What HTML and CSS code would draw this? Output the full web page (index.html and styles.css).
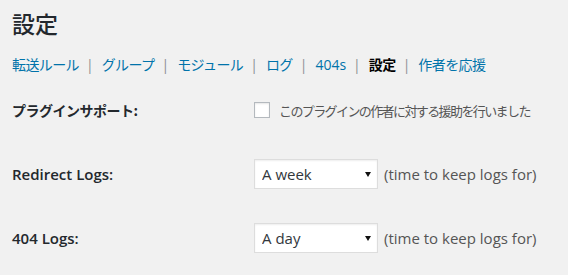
FILE: index.html
```html
<!DOCTYPE html>
<html lang="ja">
<head>
  <meta charset="UTF-8" />
  <title>設定</title>
  <link rel="stylesheet" href="styles.css">
</head>
<body>
  <div class="wrap">
    <h1>設定</h1>

    <ul class="subnav">
      <li><a href="#">転送ルール</a><span class="sep">|</span></li>
      <li><a href="#">グループ</a><span class="sep">|</span></li>
      <li><a href="#">モジュール</a><span class="sep">|</span></li>
      <li><a href="#">ログ</a><span class="sep">|</span></li>
      <li><a href="#" class="latin">404s</a><span class="sep">|</span></li>
      <li><a href="#" class="current">設定</a><span class="sep">|</span></li>
      <li><a href="#">作者を応援</a></li>
    </ul>

    <form class="form-table">
      <div class="row">
        <label class="label jp">プラグインサポート:</label>
        <div class="field">
          <label class="check">
            <input type="checkbox" />
            <span class="jp">このプラグインの作者に対する援助を行いました</span>
          </label>
        </div>
      </div>
      <div class="row">
        <label class="label" for="expire_redirect">Redirect Logs:</label>
        <div class="field">
          <span class="select-wrap">
            <select id="expire_redirect">
              <option>A week</option>
            </select>
          </span>
          <span class="desc">(time to keep logs for)</span>
        </div>
      </div>
      <div class="row">
        <label class="label" for="expire_404">404 Logs:</label>
        <div class="field">
          <span class="select-wrap">
            <select id="expire_404">
              <option>A day</option>
            </select>
          </span>
          <span class="desc">(time to keep logs for)</span>
        </div>
      </div>
    </form>
  </div>
</body>
</html>
```

FILE: styles.css
```css
html, body {
  overflow: hidden;
}

body {
  margin: 0;
  background: #f1f1f1;
  color: #444;
  font-family: "Open Sans", "Noto Sans CJK JP", sans-serif;
  font-size: 15px;
}

.wrap {
  padding: 9px 0 0 12px;
}

h1 {
  margin: 0;
  font-size: 23px;
  font-weight: 500;
  line-height: 29px;
  color: #23282d;
  font-family: "Noto Sans CJK JP", sans-serif;
}

.subnav {
  list-style: none;
  margin: 17px 0 0;
  padding: 0;
  display: flex;
  line-height: 20px;
  font-size: 14px;
}

.subnav a {
  color: #0073aa;
  text-decoration: none;
  letter-spacing: -0.6px;
}

.subnav a.latin {
  letter-spacing: 0;
}

.subnav a.current {
  color: #000;
  font-weight: 700;
}

.sep {
  color: #8c8f94;
  margin: 0 8px 0 7px;
}

.jp {
  font-family: "Noto Sans CJK JP", sans-serif;
}

.form-table {
  margin-top: 3px;
}

.row {
  display: grid;
  grid-template-columns: 242px auto;
  align-items: center;
  height: 64px;
}

.label {
  font-weight: 600;
  color: #23282d;
  font-size: 15px;
}

.label.jp {
  font-size: 14px;
  font-weight: 700;
  letter-spacing: -0.5px;
}

.field {
  display: flex;
  align-items: center;
}

.check {
  display: flex;
  align-items: center;
  color: #555;
  font-size: 13px;
}

.check span {
  letter-spacing: -1.6px;
}

.check input {
  appearance: none;
  width: 16px;
  height: 16px;
  margin: 0 9px 0 0;
  background: #fff;
  border: 1px solid #b4b9be;
  box-shadow: inset 0 1px 2px rgba(0, 0, 0, 0.1);
}

.select-wrap {
  position: relative;
  display: inline-block;
}

.select-wrap::after {
  content: "";
  position: absolute;
  right: 7px;
  top: 13px;
  border-left: 3px solid transparent;
  border-right: 3px solid transparent;
  border-top: 5px solid #111;
  pointer-events: none;
}

select {
  appearance: none;
  display: block;
  width: 124px;
  height: 30px;
  padding: 0 7px;
  margin: 0;
  border: 1px solid #ddd;
  border-radius: 0;
  background: #fff;
  box-shadow: inset 0 1px 2px rgba(0, 0, 0, 0.07);
  color: #32373c;
  font-family: "Open Sans", sans-serif;
  font-size: 15px;
}

.desc {
  margin-left: 6px;
  color: #555;
}
```
